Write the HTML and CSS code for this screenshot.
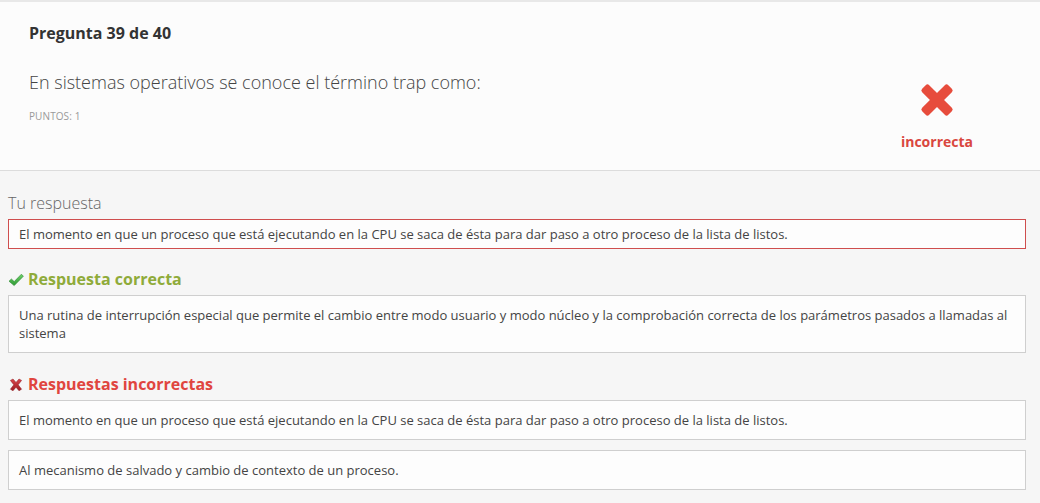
FILE: index.html
```html
<!DOCTYPE html>
<html lang="es">
<head>
<meta charset="utf-8">
<title>Pregunta 39 de 40</title>
<link rel="stylesheet" href="styles.css">
</head>
<body>
<div class="topline"></div>
<header class="qhead">
  <div class="qinfo">
    <h1 class="qnum">Pregunta 39 de 40</h1>
    <p class="qtext">En sistemas operativos se conoce el término trap como:</p>
    <p class="qpoints">PUNTOS: 1</p>
  </div>
  <div class="verdict">
    <svg class="bigx" viewBox="0 0 34 34" width="34" height="34" aria-hidden="true">
      <rect x="-1.5" y="12" width="37" height="10" rx="2.5" fill="#e74c3c" transform="rotate(45 17 17)"/>
      <rect x="-1.5" y="12" width="37" height="10" rx="2.5" fill="#e74c3c" transform="rotate(-45 17 17)"/>
    </svg>
    <span class="verdict-label">incorrecta</span>
  </div>
</header>
<main class="answers">
  <h2 class="yours-title">Tu respuesta</h2>
  <div class="box box-yours">El momento en que un proceso que está ejecutando en la CPU se saca de ésta para dar paso a otro proceso de la lista de listos.</div>

  <h2 class="sec-title sec-ok">
    <svg class="ico" viewBox="0 0 16 14" width="16" height="14" aria-hidden="true">
      <defs><linearGradient id="gk" x1="0" y1="0" x2="0" y2="1"><stop offset="0" stop-color="#6fd06a"/><stop offset="1" stop-color="#2e9a34"/></linearGradient></defs>
      <path d="M1 8.2 L3.4 6 L6.2 8.6 L13.4 1.2 L15.4 3.2 L6.2 12.6 Z" fill="url(#gk)" stroke="#2a8a2f" stroke-width="0.6" stroke-linejoin="round"/>
    </svg>
    Respuesta correcta
  </h2>
  <div class="box">Una rutina de interrupción especial que permite el cambio entre modo usuario y modo núcleo y la comprobación correcta de los parámetros pasados a llamadas al sistema</div>

  <h2 class="sec-title sec-bad">
    <svg class="ico" viewBox="0 0 16 14" width="16" height="14" aria-hidden="true">
      <defs><linearGradient id="gx" x1="0" y1="0" x2="0" y2="1"><stop offset="0" stop-color="#d9464a"/><stop offset="1" stop-color="#9e1c22"/></linearGradient></defs>
      <path d="M2.4 2.4 L5 1 L8 4.4 L11 1 L13.6 2.4 L10.2 6.8 L13.6 11.2 L11 12.8 L8 9.2 L5 12.8 L2.4 11.2 L5.8 6.8 Z" fill="url(#gx)" stroke="#8e1a1f" stroke-width="0.5" stroke-linejoin="round"/>
    </svg>
    Respuestas incorrectas
  </h2>
  <div class="box box-wrong">El momento en que un proceso que está ejecutando en la CPU se saca de ésta para dar paso a otro proceso de la lista de listos.</div>
  <div class="box box-wrong">Al mecanismo de salvado y cambio de contexto de un proceso.</div>
</main>
</body>
</html>
```

FILE: styles.css
```css
* { box-sizing: border-box; }
html, body { margin: 0; padding: 0; }
body {
  background: #f6f6f6;
  font-family: "Open Sans", "Noto Sans", sans-serif;
  color: #444;
}
.topline { height: 2px; background: #e8e8e8; }
.qhead {
  display: flex;
  justify-content: space-between;
  background: #fcfcfc;
  border-bottom: 1px solid #dcdcdc;
  height: 169px;
  padding: 0 67px 0 29px;
}
.qinfo { padding-top: 20px; }
.qnum {
  margin: 0;
  font-size: 16px;
  font-weight: 700;
  line-height: 22px;
  color: #333;
}
.qtext {
  margin: 26px 0 0;
  font-size: 18px;
  font-weight: 300;
  line-height: 24px;
  color: #444;
}
.qpoints {
  margin: 15px 0 0;
  font-size: 10px;
  line-height: 14px;
  color: #999;
  letter-spacing: 0.1px;
}
.verdict {
  display: flex;
  flex-direction: column;
  align-items: center;
  padding-top: 81px;
}
.bigx { display: block; }
.verdict-label {
  margin-top: 16px;
  font-size: 14px;
  font-weight: 700;
  line-height: 18px;
  color: #d9473f;
}
.answers {
  padding: 0 14px 0 8px;
}
.yours-title {
  margin: 22px 0 6px;
  font-size: 16px;
  font-weight: 300;
  line-height: 20px;
  color: #666;
}
.box {
  background: #fdfdfd;
  border: 1px solid #cfcfcf;
  padding: 10px 10px;
  font-size: 13px;
  line-height: 18px;
  color: #444;
}
.box-yours {
  border-color: #cf4e4e;
  padding: 5px 10px;
}
.box-wrong { margin-bottom: 10px; }
.sec-title {
  display: flex;
  align-items: center;
  gap: 4px;
  margin: 19px 0 5px;
  font-size: 16px;
  font-weight: 700;
  line-height: 22px;
}
.ico { display: block; margin-top: 2px; }
.sec-ok { color: #8fab3a; }
.sec-bad { color: #e0453f; margin-top: 20px; }
```
